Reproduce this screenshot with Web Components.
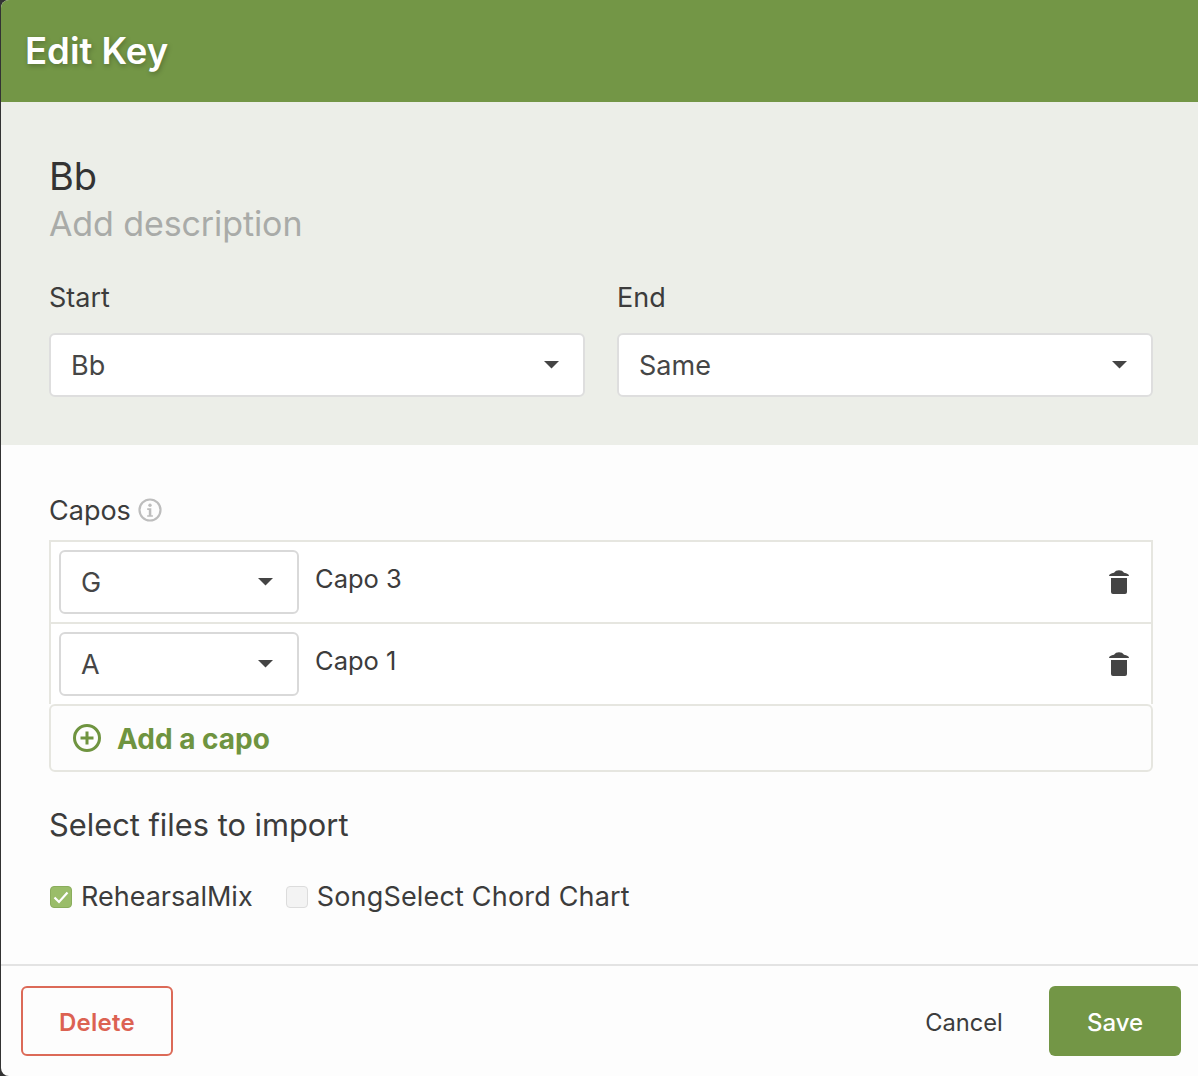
<!DOCTYPE html>
<html lang="en"><head><meta charset="utf-8"><title>Edit Key</title>
<style>
html,body{margin:0;height:100%;background:#333;overflow:hidden}
body{font-family:Inter,"Liberation Sans",sans-serif;color:#3c3c3c}
</style></head><body>
<edit-key-dialog>
  <span slot="title">Edit Key</span>
  <key-summary slot="summary" name="Bb" placeholder="Add description"></key-summary>
  <field-select slot="selects" label="Start" value="Bb"></field-select>
  <field-select slot="selects" label="End" value="Same"></field-select>
  <capo-section slot="body">
    <capo-row key="G" capo="Capo 3"></capo-row>
    <capo-row key="A" capo="Capo 1"></capo-row>
  </capo-section>
  <file-section slot="body">
    <file-check checked>RehearsalMix</file-check>
    <file-check style="gap:9px;letter-spacing:.18px">SongSelect Chord Chart</file-check>
  </file-section>
  <action-button slot="start" kind="danger">Delete</action-button>
  <action-button slot="end" kind="plain">Cancel</action-button>
  <action-button slot="end" kind="primary">Save</action-button>
</edit-key-dialog>
<script>
const def=(name,html,init)=>customElements.define(name,class extends HTMLElement{
  connectedCallback(){ if(this.shadowRoot)return; const r=this.attachShadow({mode:'open'}); r.innerHTML=html; init&&init.call(this,r);}
});
const caret='<svg width="15" height="8" viewBox="0 0 15 8" aria-hidden="true"><path d="M0 0H15L7.500 7.500Z" fill="#444"/></svg>';

def('edit-key-dialog',`<style>
:host{display:flex;flex-direction:column;box-sizing:border-box;margin-left:1px;height:1076px;background:#fdfdfd;border-radius:8px 0 0 8px;overflow:hidden}
header{height:102px;flex:none;background:#739646;color:#fff;font-weight:600;font-size:36.500px;line-height:103px;padding-left:24px;text-shadow:1px 2px 5px rgba(0,0,0,.25);box-sizing:border-box}
.top{flex:none;height:343px;box-sizing:border-box;background:#ecEEe8;padding:50px 45px 0 48px}
.grid{display:grid;grid-template-columns:536px 536px;column-gap:32px;margin-top:36px}
.body{flex:1;padding:0 45px 0 48px;min-height:0}
footer{flex:none;height:112px;box-sizing:border-box;border-top:2px solid #e3e3e3;padding:20px 17px 0 20px;display:flex;align-items:flex-start}
.sp{flex:1}
.end{display:flex;align-items:flex-start}
</style>
<header><slot name="title"></slot></header>
<section class="top"><slot name="summary"></slot><div class="grid"><slot name="selects"></slot></div></section>
<section class="body"><slot name="body"></slot></section>
<footer><slot name="start"></slot><span class="sp"></span><div class="end"><slot name="end"></slot></div></footer>`);

def('key-summary',`<style>
:host{display:block}
.n{font-size:38px;line-height:48px;color:#333}
.d{font-size:34px;line-height:46px;color:#a9aba8;letter-spacing:-.1px;padding-top:1px;margin-bottom:-1px}
</style><div class="n"></div><div class="d"></div>`,function(r){
  r.querySelector('.n').textContent=this.getAttribute('name');
  r.querySelector('.d').textContent=this.getAttribute('placeholder');
});

def('select-box',`<style>
:host{display:flex;box-sizing:border-box;height:64px;align-items:center;justify-content:space-between;background:#fff;border:2px solid #dedede;border-radius:6px;padding:0 24px 0 20px;font-size:27px;color:#464646}
svg{display:block}
</style><span><slot></slot></span>${caret}`);

def('field-select',`<style>
:host{display:block}
label{display:block;font-size:27px;line-height:32px;color:#3c3c3c;margin-bottom:19px}
</style><label></label><select-box></select-box>`,function(r){
  r.querySelector('label').textContent=this.getAttribute('label');
  r.querySelector('select-box').textContent=this.getAttribute('value');
});

def('capo-section',`<style>
:host{display:block;padding-top:48px}
.h{display:flex;align-items:center;gap:7px;font-size:27px;line-height:36px;color:#3c3c3c;margin-bottom:11px}
svg.i{display:block;margin-top:-2px}
.list{border:2px solid #e6e6e0;border-width:2px 2px 0 2px}
.add{box-sizing:border-box;height:68px;border:2px solid #e6e6e0;border-radius:6px;background:#fdfdfd;display:flex;align-items:center;gap:16px;padding-left:22px;color:#6f9440;font-weight:700;font-size:28px}
.add span{padding-top:1px}
svg.p{display:block}
</style><div class="h"><span>Capos</span><svg class="i" width="24" height="24" viewBox="0 0 24 24" aria-hidden="true"><circle cx="12" cy="12" r="10.500" fill="none" stroke="#bdbdbd" stroke-width="2.200"/><circle cx="12" cy="7.200" r="1.700" fill="#bdbdbd"/><path d="M9.200 10.300h4.100v6.900h1.600v1.600H9.200v-1.600h1.600v-5.300H9.200z" fill="#bdbdbd"/></svg></div>
<div class="list"><slot></slot></div>
<div class="add"><svg class="p" width="28" height="28" viewBox="0 0 28 28" aria-hidden="true"><circle cx="14" cy="14" r="12.500" fill="none" stroke="#6f9440" stroke-width="3"/><path d="M14 7.500v13M7.500 14h13" stroke="#6f9440" stroke-width="3" fill="none"/></svg><span>Add a capo</span></div>`);

def('capo-row',`<style>
:host{display:flex;box-sizing:border-box;height:82px;align-items:flex-start;background:#fff;border-bottom:2px solid #e6e6e0;padding:8px 0 0 8px;font-size:25.500px;color:#3c3c3c}
:host(:last-child){border-bottom:0;height:80px}
select-box{width:240px;flex:none;border-color:#d9d9d9}
.c{flex:1;margin-left:16px;line-height:44px;margin-top:7px}
svg{display:block;margin:20px 22px 0 0}
</style><select-box></select-box><span class="c"></span><svg width="20" height="24" viewBox="0 0 20 24" aria-hidden="true"><path fill="#444" d="M0 6C0 4.200 2 3.200 5 2.700 7 -.6 13 -.6 15 2.700 18 3.200 20 4.200 20 6ZM2 8H18V22a2 2 0 0 1-2 2H4a2 2 0 0 1-2-2Z"/></svg>`,function(r){
  r.querySelector('select-box').textContent=this.getAttribute('key');
  r.querySelector('.c').textContent=this.getAttribute('capo');
});

def('file-section',`<style>
:host{display:block;padding-top:33px}
h2{margin:0;font-weight:400;font-size:30.800px;line-height:40px;color:#3c3c3c}
.row{display:flex;gap:33px;margin:34px 0 0 1px}
</style><h2>Select files to import</h2><div class="row"><slot></slot></div>`);

def('file-check',`<style>
:host{display:inline-flex;align-items:center;gap:9px;font-size:27px;line-height:36px;color:#3c3c3c}
.b{box-sizing:border-box;width:22px;height:22px;border-radius:4px;border:1px solid #dcdcdc;background:#f3f3f3;display:flex;align-items:center;justify-content:center}
:host([checked]) .b{background:#9abd69;border-color:#8aad5c}
svg{display:none}
:host([checked]) svg{display:block}
</style><span class="b"><svg width="16" height="13" viewBox="0 0 16 13" aria-hidden="true"><path d="M1.500 6.500l4.500 4.500 8.500-9.500" fill="none" stroke="#fff" stroke-width="2.200"/></svg></span><span><slot></slot></span>`);

def('action-button',`<style>
:host{display:inline-flex;box-sizing:border-box;height:70px;align-items:center;justify-content:center;font-size:24px;border-radius:6px;padding-top:2px}
:host([kind=danger]){width:152px;border:2px solid #dc6a58;color:#dc6252;font-weight:600;letter-spacing:.3px}
:host([kind=plain]){width:100px;color:#3c3c3c;margin-right:35px;font-size:23.700px}
:host([kind=primary]){width:132px;background:#739646;color:#fff;font-weight:500}
</style><slot></slot>`);
</script>
</body></html>
